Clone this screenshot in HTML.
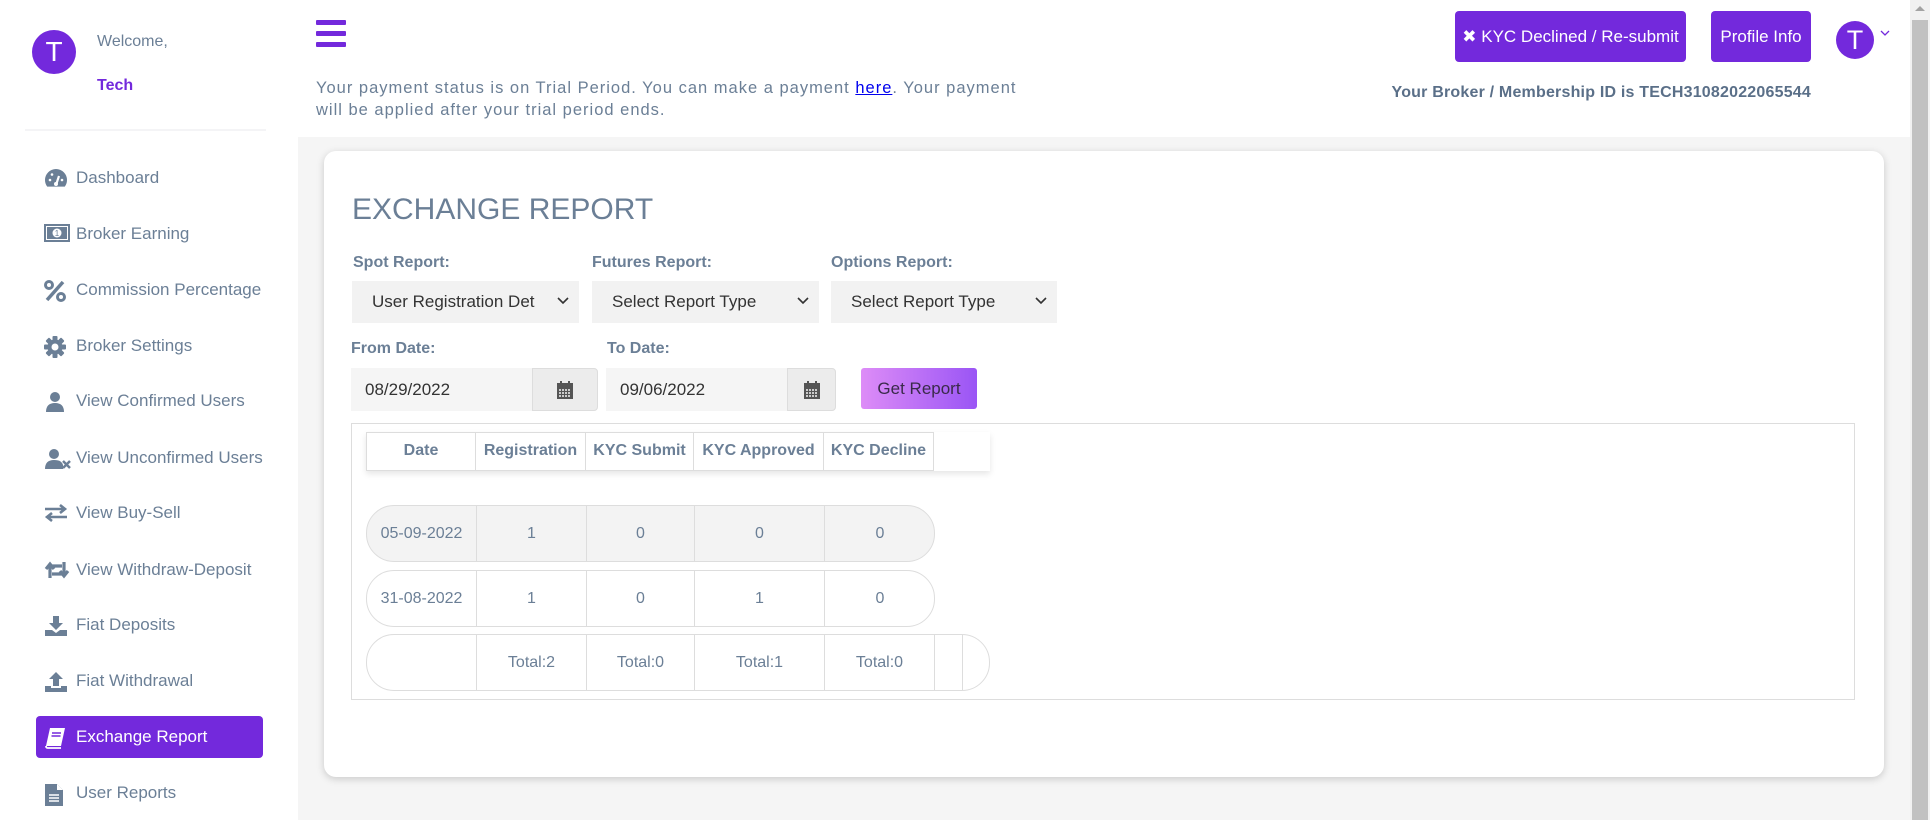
<!DOCTYPE html>
<html><head><meta charset="utf-8"><style>
*{box-sizing:border-box;margin:0;padding:0}
body{width:1930px;height:820px;overflow:hidden;font-family:"Liberation Sans",Arial,sans-serif;background:#f5f5f5;position:relative;color:#6b7f96}
.abs{position:absolute}
#side{left:0;top:0;width:298px;height:820px;background:#fff}
#head{left:298px;top:0;width:1612px;height:137px;background:#fff}
.av{border-radius:50%;background:#7329dc;color:#fff;text-align:center}
.mi{position:absolute;left:36px;width:227px;height:42px;border-radius:4px;font-size:17px;color:#6b7f96;line-height:42px}
.mi svg{position:absolute;left:8px;top:11px}
.mi span{position:absolute;left:40px}
.mi.act{background:#7329dc;color:#fff}
.btn{background:#7329dc;color:#fff;border-radius:4px;font-size:17px;text-align:center}
#card{left:324px;top:151px;width:1560px;height:626px;background:#fff;border-radius:12px;box-shadow:0 2px 8px rgba(0,0,0,.18)}
.lbl{font-size:16px;font-weight:bold;color:#6b7f96}
.sel{background:#f2f2f2;height:42px;font-size:17px;color:#333;line-height:42px;padding-left:20px}
.sel svg{position:absolute;right:10px;top:16px}
.inp{background:#f5f5f5;height:43px;font-size:17px;color:#333;line-height:43px;padding-left:14px;border-radius:0 4px 4px 0}
.cal{position:absolute;top:0;right:0;height:43px;background:#ececec;border:1px solid #ddd;border-radius:0 4px 4px 0}
.cal svg{position:absolute;left:50%;top:50%;transform:translate(-50%,-50%)}
.row{position:absolute;left:366px;height:57px;border:1px solid #ddd;border-radius:28px;font-size:16px;color:#6b7f96}
.c{position:absolute;top:0;height:100%;border-right:1px solid #ddd;text-align:center;line-height:55px}
.hc{position:absolute;top:0;height:100%;border:1px solid #ddd;border-left:none;text-align:center;line-height:36px;font-weight:bold;font-size:16px}
</style></head><body>
<div id="side" class="abs">
  <div class="abs av" style="left:32px;top:30px;width:44px;height:44px;font-size:28px;line-height:44px">T</div>
  <div class="abs" style="left:97px;top:33px;font-size:16px;color:#6b7f96">Welcome,</div>
  <div class="abs" style="left:97px;top:77px;font-size:16px;font-weight:bold;color:#7329dc">Tech</div>
  <div class="abs" style="left:25px;top:129px;width:241px;height:2px;background:#f4f4f6"></div>

  <div class="mi" style="top:157px"><svg width="24" height="20" viewBox="0 0 24 20"><path d="M12 1A11 11 0 0 0 1 12c0 2.5.8 4.8 2.2 6.6h17.6A11 11 0 0 0 23 12 11 11 0 0 0 12 1z" fill="#6b7f96"/><path d="M12 17l3-9" stroke="#fff" stroke-width="2.2"/><circle cx="12" cy="16" r="2" fill="#fff"/><circle cx="6" cy="12" r="1.3" fill="#fff"/><circle cx="8" cy="6.5" r="1.3" fill="#fff"/><circle cx="18" cy="12" r="1.3" fill="#fff"/></svg><span>Dashboard</span></div>
  <div class="mi" style="top:213px"><svg width="26" height="18" viewBox="0 0 26 18"><rect x="1" y="1" width="24" height="16" fill="none" stroke="#6b7f96" stroke-width="2"/><rect x="3" y="3" width="20" height="12" fill="#6b7f96"/><circle cx="13" cy="9" r="4.5" fill="#fff"/><text x="13" y="12" font-size="8" text-anchor="middle" fill="#6b7f96" font-family="Liberation Sans">1</text></svg><span>Broker Earning</span></div>
  <div class="mi" style="top:269px"><svg width="22" height="22" viewBox="0 0 22 22"><circle cx="5" cy="5" r="3.5" fill="none" stroke="#6b7f96" stroke-width="3"/><circle cx="17" cy="17" r="3.5" fill="none" stroke="#6b7f96" stroke-width="3"/><path d="M19 2L3 20" stroke="#6b7f96" stroke-width="3.5"/></svg><span>Commission Percentage</span></div>
  <div class="mi" style="top:325px"><svg width="22" height="22" viewBox="0 0 22 22"><g fill="#6b7f96"><circle cx="11" cy="11" r="7.5"/><rect x="8.5" y="0" width="5" height="22" rx="1"/><rect x="0" y="8.5" width="22" height="5" rx="1"/><rect x="8.5" y="0" width="5" height="22" rx="1" transform="rotate(45 11 11)"/><rect x="8.5" y="0" width="5" height="22" rx="1" transform="rotate(-45 11 11)"/></g><circle cx="11" cy="11" r="3.5" fill="#fff"/></svg><span>Broker Settings</span></div>
  <div class="mi" style="top:380px"><svg width="22" height="22" viewBox="0 0 22 22"><circle cx="11" cy="6" r="5" fill="#6b7f96"/><path d="M2 21c0-6 3-9 9-9s9 3 9 9z" fill="#6b7f96"/></svg><span>View Confirmed Users</span></div>
  <div class="mi" style="top:437px"><svg width="28" height="22" viewBox="0 0 28 22"><circle cx="10" cy="6" r="5" fill="#6b7f96"/><path d="M1 21c0-6 3-9 9-9s8 2 9 5v4z" fill="#6b7f96"/><path d="M19 13l7 7M26 13l-7 7" stroke="#6b7f96" stroke-width="2.5"/></svg><span>View Unconfirmed Users</span></div>
  <div class="mi" style="top:492px"><svg width="24" height="20" viewBox="0 0 24 20"><path d="M1 6h19M16 2l5 4-5 4M23 14H4M8 10l-5 4 5 4" fill="none" stroke="#6b7f96" stroke-width="2.6"/></svg><span>View Buy-Sell</span></div>
  <div class="mi" style="top:549px"><svg width="26" height="20" viewBox="0 0 26 20"><path d="M6 18V6h12M2 9l4-5 4 5M20 2v12H8M24 11l-4 5-4-5" fill="none" stroke="#6b7f96" stroke-width="3.2"/></svg><span>View Withdraw-Deposit</span></div>
  <div class="mi" style="top:604px"><svg width="24" height="22" viewBox="0 0 24 22"><path d="M9 1h6v7h4l-7 7-7-7h4z" fill="#6b7f96"/><path d="M1 15h7l4 3 4-3h7v6H1z" fill="#6b7f96"/></svg><span>Fiat Deposits</span></div>
  <div class="mi" style="top:660px"><svg width="24" height="22" viewBox="0 0 24 22"><path d="M9 15h6V8h4L12 1 5 8h4z" fill="#6b7f96"/><path d="M1 15h6v2h10v-2h6v6H1z" fill="#6b7f96"/></svg><span>Fiat Withdrawal</span></div>
  <div class="mi act" style="top:716px"><svg width="22" height="22" viewBox="0 0 22 22"><path d="M6 1h15l-4 18H2z" fill="#fff"/><path d="M8 6h9M7.5 9h9" stroke="#7329dc" stroke-width="1.6"/><path d="M2 19c0 2 1 2 2 2h13" fill="none" stroke="#fff" stroke-width="1.8"/></svg><span>Exchange Report</span></div>
  <div class="mi" style="top:772px"><svg width="20" height="24" viewBox="0 0 20 24"><path d="M1 1h12l6 6v16H1z" fill="#6b7f96"/><path d="M13 1v6h6" fill="#fff"/><path d="M5 12h10M5 15h10M5 18h10" stroke="#fff" stroke-width="1.5"/></svg><span>User Reports</span></div>
</div>

<div id="head" class="abs"></div>
<svg class="abs" style="left:316px;top:20px" width="30" height="27" viewBox="0 0 30 27"><g fill="#7329dc"><rect y="0" width="30" height="5" rx="1"/><rect y="11" width="30" height="5" rx="1"/><rect y="22" width="30" height="5" rx="1"/></g></svg>
<div class="abs" style="left:316px;top:77px;width:725px;font-size:16.5px;line-height:22px;letter-spacing:1px;color:#6b7f96">Your payment status is on Trial Period. You can make a payment <a style="color:#00e;text-decoration:underline">here</a>. Your payment will be applied after your trial period ends.</div>
<div class="abs btn" style="left:1455px;top:11px;width:231px;height:51px;line-height:51px">✖ KYC Declined / Re-submit</div>
<div class="abs btn" style="left:1711px;top:11px;width:100px;height:51px;line-height:51px">Profile Info</div>
<div class="abs av" style="left:1836px;top:21px;width:38px;height:38px;font-size:27px;line-height:38px">T</div>
<svg class="abs" style="left:1880px;top:30px" width="10" height="7" viewBox="0 0 10 7"><path d="M1 1l4 4 4-4" fill="none" stroke="#7329dc" stroke-width="1.3"/></svg>
<div class="abs" style="right:119px;top:84px;font-size:16px;letter-spacing:.2px;font-weight:bold;color:#5a6f88">Your Broker / Membership ID is TECH31082022065544</div>

<div class="abs" style="left:1910px;top:0;width:20px;height:820px;background:#f1f1f1"></div>
<div class="abs" style="left:1912px;top:20px;width:16px;height:800px;background:#c1c1c1"></div>
<svg class="abs" style="left:1914px;top:5px" width="12" height="7"><path d="M1 6l5-5 5 5z" fill="#a3a3a3"/></svg>

<div id="card" class="abs"></div>
<div class="abs" style="left:352px;top:193px;font-size:30px;color:#6b7f96">EXCHANGE REPORT</div>
<div class="abs lbl" style="left:353px;top:254px">Spot Report:</div>
<div class="abs lbl" style="left:592px;top:254px">Futures Report:</div>
<div class="abs lbl" style="left:831px;top:254px">Options Report:</div>
<div class="abs sel" style="left:352px;top:281px;width:227px">User Registration Det<svg width="12" height="8"><path d="M1 1l5 5 5-5" fill="none" stroke="#333" stroke-width="1.6"/></svg></div>
<div class="abs sel" style="left:592px;top:281px;width:227px">Select Report Type<svg width="12" height="8"><path d="M1 1l5 5 5-5" fill="none" stroke="#333" stroke-width="1.6"/></svg></div>
<div class="abs sel" style="left:831px;top:281px;width:226px">Select Report Type<svg width="12" height="8"><path d="M1 1l5 5 5-5" fill="none" stroke="#333" stroke-width="1.6"/></svg></div>
<div class="abs lbl" style="left:351px;top:340px">From Date:</div>
<div class="abs lbl" style="left:607px;top:340px">To Date:</div>
<div class="abs inp" style="left:351px;top:368px;width:247px">08/29/2022<div class="cal" style="width:66px"><svg width="16" height="18" viewBox="0 0 16 18"><rect x="0" y="2" width="16" height="16" fill="#555"/><rect x="3" y="0" width="2" height="4" fill="#555"/><rect x="11" y="0" width="2" height="4" fill="#555"/><g fill="#ccc"><rect x="2" y="8" width="2" height="2"/><rect x="5" y="8" width="2" height="2"/><rect x="8" y="8" width="2" height="2"/><rect x="11" y="8" width="2" height="2"/><rect x="2" y="11" width="2" height="2"/><rect x="5" y="11" width="2" height="2"/><rect x="8" y="11" width="2" height="2"/><rect x="11" y="11" width="2" height="2"/><rect x="2" y="14" width="2" height="2"/><rect x="5" y="14" width="2" height="2"/><rect x="8" y="14" width="2" height="2"/><rect x="11" y="14" width="2" height="2"/></g></svg></div></div>
<div class="abs inp" style="left:606px;top:368px;width:230px">09/06/2022<div class="cal" style="width:49px"><svg width="16" height="18" viewBox="0 0 16 18"><rect x="0" y="2" width="16" height="16" fill="#555"/><rect x="3" y="0" width="2" height="4" fill="#555"/><rect x="11" y="0" width="2" height="4" fill="#555"/><g fill="#ccc"><rect x="2" y="8" width="2" height="2"/><rect x="5" y="8" width="2" height="2"/><rect x="8" y="8" width="2" height="2"/><rect x="11" y="8" width="2" height="2"/><rect x="2" y="11" width="2" height="2"/><rect x="5" y="11" width="2" height="2"/><rect x="8" y="11" width="2" height="2"/><rect x="11" y="11" width="2" height="2"/><rect x="2" y="14" width="2" height="2"/><rect x="5" y="14" width="2" height="2"/><rect x="8" y="14" width="2" height="2"/><rect x="11" y="14" width="2" height="2"/></g></svg></div></div>
<div class="abs" style="left:861px;top:368px;width:116px;height:41px;border-radius:3px;background:linear-gradient(90deg,#dd8cf7,#9a55f5);color:#3a2a4a;font-size:17px;text-align:center;line-height:41px">Get Report</div>

<div class="abs" style="left:351px;top:423px;width:1504px;height:277px;border:1px solid #ddd"></div>
<div class="abs" style="left:366px;top:432px;width:624px;height:39px;background:#fff;box-shadow:0 3px 6px rgba(0,0,0,.1);color:#6b7f96">
  <div class="hc" style="left:0;width:110px;border-left:1px solid #ddd">Date</div>
  <div class="hc" style="left:110px;width:110px">Registration</div>
  <div class="hc" style="left:220px;width:108px">KYC Submit</div>
  <div class="hc" style="left:328px;width:130px">KYC Approved</div>
  <div class="hc" style="left:458px;width:110px">KYC Decline</div>
</div>
<div class="row" style="top:505px;width:569px;background:#f3f3f3">
  <div class="c" style="left:0;width:110px">05-09-2022</div><div class="c" style="left:110px;width:110px">1</div><div class="c" style="left:220px;width:108px">0</div><div class="c" style="left:328px;width:130px">0</div><div class="c" style="left:458px;width:110px;border:none">0</div>
</div>
<div class="row" style="top:570px;width:569px">
  <div class="c" style="left:0;width:110px">31-08-2022</div><div class="c" style="left:110px;width:110px">1</div><div class="c" style="left:220px;width:108px">0</div><div class="c" style="left:328px;width:130px">1</div><div class="c" style="left:458px;width:110px;border:none">0</div>
</div>
<div class="row" style="top:634px;width:624px">
  <div class="c" style="left:0;width:110px"></div><div class="c" style="left:110px;width:110px">Total:2</div><div class="c" style="left:220px;width:108px">Total:0</div><div class="c" style="left:328px;width:130px">Total:1</div><div class="c" style="left:458px;width:110px">Total:0</div><div class="c" style="left:568px;width:28px"></div>
</div>
</body></html>
